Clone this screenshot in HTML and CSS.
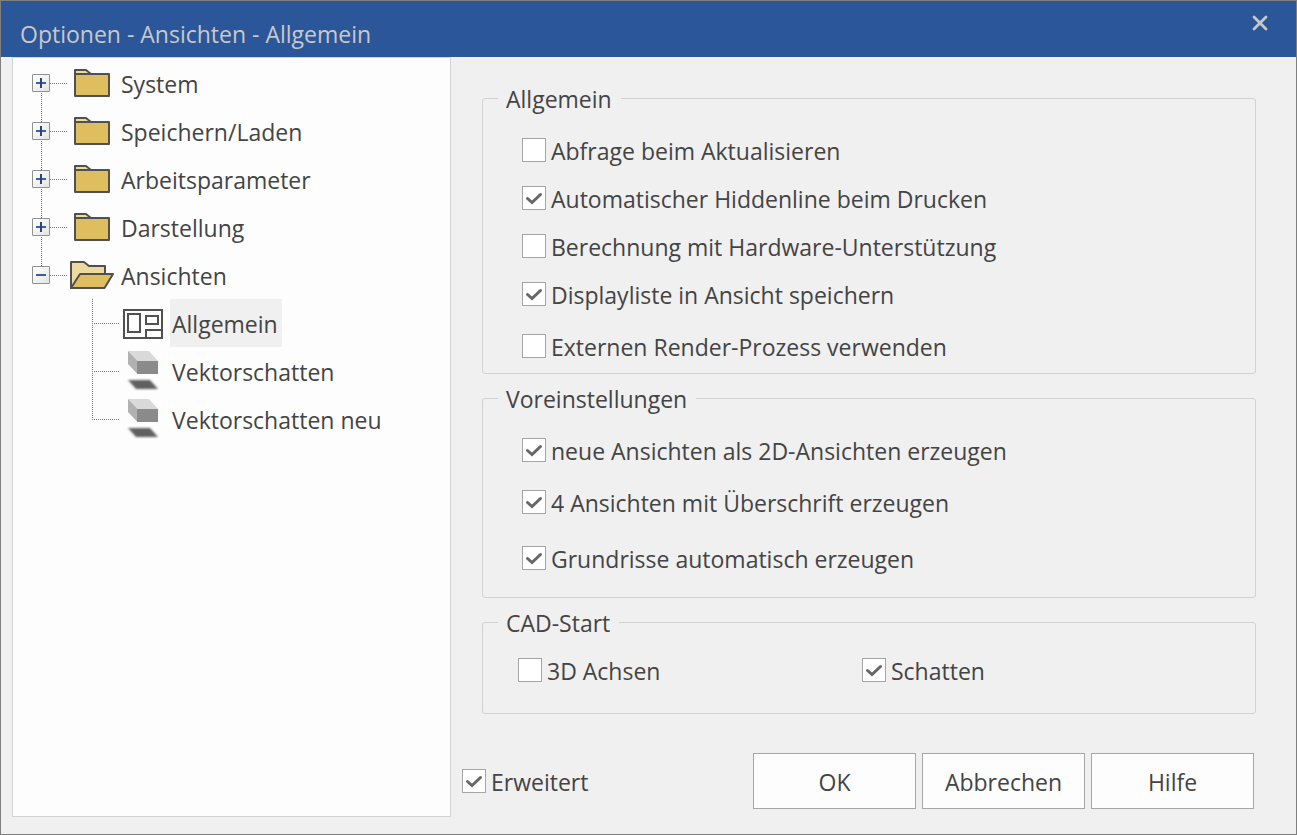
FILE: index.html
```html
<!DOCTYPE html>
<html lang="de">
<head>
<meta charset="utf-8">
<meta name="viewport" content="width=device-width, initial-scale=1">
<title>Optionen - Ansichten - Allgemein</title>
<link rel="stylesheet" href="styles.css">
</head>
<body>
<svg class="sprite" aria-hidden="true">
  <defs>
    <filter id="soft" x="-20%" y="-40%" width="140%" height="180%"><feGaussianBlur stdDeviation="0.8"/></filter>
    <symbol id="folder" viewBox="0 0 46 32">
      <path d="M5 6V2H16L21 6" fill="#eddaa0" stroke="#505050" stroke-width="2" stroke-linejoin="round"/>
      <rect x="5" y="6" width="34" height="22" fill="#dfbe60" stroke="#505050" stroke-width="2" stroke-linejoin="round"/>
    </symbol>
    <symbol id="folder-open" viewBox="0 0 46 32">
      <path d="M1 28V2H14L19 6H35V15L27 28Z" fill="#eddaa0" stroke="#505050" stroke-width="2" stroke-linejoin="round"/>
      <path d="M1 28L10 14H43L34.500 28Z" fill="#dfbe60" stroke="#505050" stroke-width="2" stroke-linejoin="round"/>
    </symbol>
    <symbol id="views" viewBox="0 0 40 42">
      <g fill="none" stroke="#505050" stroke-width="2">
        <rect x="1" y="8" width="38" height="28"/>
        <rect x="5" y="12" width="12" height="18"/>
        <rect x="23" y="14" width="12" height="8"/>
        <path d="M23 36V28H39"/>
      </g>
    </symbol>
    <symbol id="shadow" viewBox="0 0 40 42">
      <path d="M5 1H26L35 11H14Z" fill="#d9d9d9"/>
      <path d="M5 1L14.500 11V24L5 14Z" fill="#b1b1b1"/>
      <path d="M14 11H35V24H14Z" fill="#8b8b8b"/>
      <path d="M5 30H27L35 39H13Z" fill="#606060" filter="url(#soft)"/>
    </symbol>
  </defs>
</svg>
<main class="dialog">
  <header class="titlebar">
    <h1 class="title">Optionen - Ansichten - Allgemein</h1>
    <button class="close" type="button" aria-label="Schließen">
      <svg width="16" height="16" viewBox="0 0 16 16"><path d="M2 2L14 14M14 2L2 14" fill="none" stroke="#c8c8c8" stroke-width="2.800" stroke-linecap="round"/></svg>
    </button>
  </header>
  <div class="body">
    <nav class="sidebar" aria-label="Kategorien">
      <ul class="tree">
        <li class="branch"><div class="node"><button class="toggle plus" type="button" aria-label="System aufklappen"></button><svg class="folder"><use href="#folder"/></svg><a class="label" href="#system">System</a></div></li>
        <li class="branch"><div class="node"><button class="toggle plus" type="button" aria-label="Speichern/Laden aufklappen"></button><svg class="folder"><use href="#folder"/></svg><a class="label" href="#speichern">Speichern/Laden</a></div></li>
        <li class="branch"><div class="node"><button class="toggle plus" type="button" aria-label="Arbeitsparameter aufklappen"></button><svg class="folder"><use href="#folder"/></svg><a class="label" href="#arbeitsparameter">Arbeitsparameter</a></div></li>
        <li class="branch"><div class="node"><button class="toggle plus" type="button" aria-label="Darstellung aufklappen"></button><svg class="folder"><use href="#folder"/></svg><a class="label" href="#darstellung">Darstellung</a></div></li>
        <li class="branch"><div class="node"><button class="toggle" type="button" aria-label="Ansichten zuklappen"></button><svg class="folder"><use href="#folder-open"/></svg><a class="label" href="#ansichten">Ansichten</a></div>
          <ul class="subtree">
            <li class="leaf"><svg class="leaf-icon"><use href="#views"/></svg><a class="label selected" href="#allgemein">Allgemein</a></li>
            <li class="leaf"><svg class="leaf-icon"><use href="#shadow"/></svg><a class="label" href="#vektorschatten">Vektorschatten</a></li>
            <li class="leaf"><svg class="leaf-icon"><use href="#shadow"/></svg><a class="label" href="#vektorschatten-neu">Vektorschatten neu</a></li>
          </ul>
        </li>
      </ul>
    </nav>
    <form class="content">
      <div class="groups">
        <fieldset class="group">
          <legend>Allgemein</legend>
          <label class="check"><input type="checkbox"><span>Abfrage beim Aktualisieren</span></label>
          <label class="check"><input type="checkbox" checked><span>Automatischer Hiddenline beim Drucken</span></label>
          <label class="check"><input type="checkbox"><span>Berechnung mit Hardware-Unterstützung</span></label>
          <label class="check"><input type="checkbox" checked><span>Displayliste in Ansicht speichern</span></label>
          <label class="check spaced"><input type="checkbox"><span>Externen Render-Prozess verwenden</span></label>
        </fieldset>
        <fieldset class="group presets">
          <legend>Voreinstellungen</legend>
          <label class="check"><input type="checkbox" checked><span>neue Ansichten als 2D-Ansichten erzeugen</span></label>
          <label class="check spaced"><input type="checkbox" checked><span>4 Ansichten mit Überschrift erzeugen</span></label>
          <label class="check spaced-wide"><input type="checkbox" checked><span>Grundrisse automatisch erzeugen</span></label>
        </fieldset>
        <fieldset class="group start">
          <legend>CAD-Start</legend>
          <div class="columns">
            <label class="check"><input type="checkbox"><span>3D Achsen</span></label>
            <label class="check"><input type="checkbox" checked><span>Schatten</span></label>
          </div>
        </fieldset>
      </div>
      <footer class="footer">
        <label class="check"><input type="checkbox" checked><span>Erweitert</span></label>
        <div class="actions">
          <button class="action" type="button">OK</button>
          <button class="action" type="button">Abbrechen</button>
          <button class="action" type="button">Hilfe</button>
        </div>
      </footer>
    </form>
  </div>
</main>
</body>
</html>
```
FILE: styles.css
```css
* { box-sizing: border-box; }

body {
  margin: 0;
  color: #444;
  font: 23px/32px "Open Sans", "Noto Sans", sans-serif;
}

button, input { font: inherit; color: inherit; }
ul { margin: 0; padding: 0; list-style: none; }
.sprite { position: absolute; width: 0; height: 0; }

.dialog {
  display: flex;
  flex-direction: column;
  min-height: 100vh;
  border: 1px solid #7f7f7f;
  background: #f0f0f0;
}

.titlebar {
  display: flex;
  justify-content: space-between;
  align-items: flex-start;
  height: 56px;
  padding: 0 20px 0 19px;
  background: #2b579a;
}

.title {
  margin: 0;
  padding-top: 17px;
  color: #c8c8c8;
  font-size: 23px;
  font-weight: 400;
}

.close {
  display: grid;
  place-items: center;
  width: 32px;
  height: 44px;
  padding: 0;
  border: 0;
  background: none;
}

.body {
  display: flex;
  flex: 1;
  padding: 0 40px 17px 11px;
}

.sidebar {
  flex: 0 0 439px;
  padding-top: 1px;
  border: 1px solid #d2d2d2;
  background: #fdfdfd;
}

.branch, .leaf { position: relative; }

.node {
  display: flex;
  align-items: center;
  height: 48px;
  padding-left: 19px;
}

/* dotted guide between neighbouring toggles */
.branch:not(:last-child)::before {
  content: "";
  position: absolute;
  left: 28px;
  top: 34px;
  width: 1px;
  height: 30px;
  background: repeating-linear-gradient(#777 0 1px, transparent 1px 2px);
}

.toggle {
  position: relative;
  width: 18px;
  height: 18px;
  padding: 0;
  border: 1px solid #919191;
  border-radius: 1px;
  background: linear-gradient(135deg, #fff, #e4e4e4);
}

.toggle::before, .toggle.plus::after {
  content: "";
  position: absolute;
  left: 3px;
  top: 7px;
  width: 10px;
  height: 2px;
  background: #3f5ba5;
}

.toggle.plus::after {
  left: 7px;
  top: 3px;
  width: 2px;
  height: 10px;
  background: #2c4484;
}

.node::after {
  content: "";
  order: 1;
  width: 17px;
  height: 1px;
  background: repeating-linear-gradient(90deg, #777 0 1px, transparent 1px 2px);
}

.folder {
  order: 2;
  width: 46px;
  height: 32px;
  margin: 2px 3px 0;
}

.label {
  display: flex;
  align-items: center;
  height: 48px;
  padding: 2px 4px 0 2px;
  color: inherit;
  text-decoration: none;
  white-space: nowrap;
}

.node .label { order: 3; }
.selected { background: #f0f0f0; }

.subtree { padding-left: 79px; }

.leaf {
  display: flex;
  align-items: center;
  height: 48px;
}

.leaf::before {
  content: "";
  width: 27px;
  height: 1px;
  background: repeating-linear-gradient(90deg, #777 0 1px, transparent 1px 2px);
}

.leaf::after {
  content: "";
  position: absolute;
  left: 0;
  top: 0;
  width: 1px;
  height: 48px;
  background: repeating-linear-gradient(#777 0 1px, transparent 1px 2px);
}

.leaf:last-child::after { height: 24px; }

.leaf-icon {
  width: 40px;
  height: 42px;
  margin: 0 7px 0 4px;
}

.content {
  display: flex;
  flex: 1;
  flex-direction: column;
  justify-content: space-between;
  min-width: 0;
  padding: 25px 0 8px 11px;
}

.groups {
  display: flex;
  flex-direction: column;
  gap: 8px;
  margin-left: 20px;
}

.group {
  min-width: 0;
  margin: 0;
  padding: 24px 39px 15px;
  border: 1px solid #d2d2d2;
  border-radius: 3px;
}

.group legend {
  height: 32px;
  margin-left: -24px;
  padding: 1px 9px 0 8px;
  line-height: 32px;
}

.check {
  display: flex;
  align-items: center;
  gap: 5px;
  height: 24px;
}

.check + .check { margin-top: 24px; }
.check + .spaced { margin-top: 28px; }
.check + .spaced-wide { margin-top: 32px; }

.check span { padding-top: 2px; white-space: nowrap; }

.check input {
  flex: none;
  width: 24px;
  height: 24px;
  margin: 0;
  border: 1px solid #a6a6a6;
  background: #fff;
  appearance: none;
}

.check input:checked {
  background: #fff url("data:image/svg+xml,%3Csvg xmlns='http://www.w3.org/2000/svg' viewBox='0 0 22 22'%3E%3Cpath d='M4.500 11.500L9 15.500L17.500 7.500' fill='none' stroke='%23666' stroke-width='3' stroke-linecap='round'/%3E%3C/svg%3E") center / 22px 22px no-repeat;
}

.presets { padding-bottom: 27px; }

.start { padding: 20px 35px 31px; }
.start legend { margin-left: -20px; }

.columns {
  display: grid;
  grid-template-columns: 49% 51%;
}

.columns .check { margin: 0; }

.footer {
  display: flex;
  justify-content: space-between;
  align-items: center;
  margin-right: 2px;
}

.actions { display: flex; gap: 6px; }

.action {
  width: 163px;
  height: 56px;
  padding: 2px 0 0;
  border: 1px solid #a6a6a6;
  background: #fdfdfd;
}
```
